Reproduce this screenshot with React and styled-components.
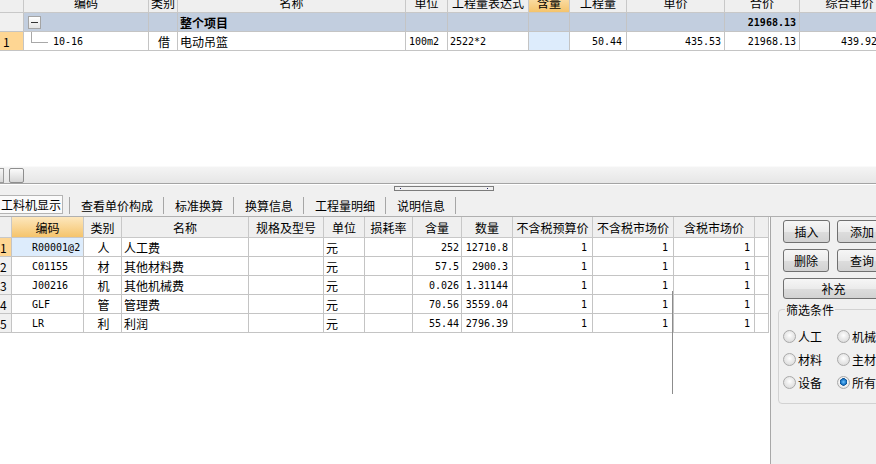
import React from "react";
import styled, { createGlobalStyle } from "styled-components";

const GlobalStyle = createGlobalStyle`
  html, body {
    margin: 0;
    padding: 0;
    background: #f0f0f0;
    overflow: hidden;
  }
  body {
    font-family: "Noto Sans CJK SC", "Noto Sans", sans-serif;
    font-size: 12px;
    color: #000;
  }
`;

const CJK = `"Noto Sans CJK SC", "Noto Sans", sans-serif`;
const MONO = `"DejaVu Sans Mono", "Noto Sans CJK SC", monospace`;

const TOP_COLS = "24px 125px 29px 228px 42px 81px 41px 57px 98px 75px 100px";
const LOW_COLS =
  "12px 72px 38px 127px 75px 41px 48px 49px 51px 80px 81px 81px 14px";

const Page = styled.div`
  width: 876px;
  height: 464px;
  display: flex;
  flex-direction: column;
  overflow: hidden;
  background: #f0f0f0;
`;

/* ---------- upper grid ---------- */

const TopGrid = styled.div`
  height: 166px;
  background: #fff;
  overflow: hidden;
  flex-shrink: 0;
`;

const Row = styled.div`
  display: grid;
  grid-template-columns: ${p => p.$cols};
  height: ${p => p.$h || 19}px;
  background: ${p => p.$bg || "#fff"};
  width: max-content;
`;

const HeadRow = styled(Row)`
  margin-top: ${p => p.$shift || 0}px;
  background: #efefef;
`;

const Cell = styled.div`
  box-sizing: border-box;
  border-right: 1px solid #c4c4c4;
  border-bottom: 1px solid #c4c4c4;
  display: flex;
  align-items: center;
  justify-content: ${p =>
    p.$align === "right" ? "flex-end" : p.$align === "center" ? "center" : "flex-start"};
  padding: 0 ${p => (p.$align === "right" ? p.$pad ?? 3 : 0)}px 0
    ${p => (p.$align === "right" ? 0 : p.$pad ?? 2)}px;
  font-family: ${p => (p.$mono ? MONO : CJK)};
  font-size: ${p => (p.$mono ? "10px" : "12px")};
  font-weight: ${p => (p.$bold ? 700 : 400)};
  background: ${p => p.$bg || "transparent"};
  white-space: nowrap;
  overflow: hidden;
`;

const HeadCell = styled(Cell)`
  justify-content: center;
  padding: 0;
  background: ${p =>
    p.$hot ? "linear-gradient(#fde7bd, #f5c46c)" : "#efefef"};
  border-color: #c8c8c8;
`;

const NumCell = styled(Cell)`
  background: ${p => (p.$hot ? "#fed693" : "#f0f0f0")};
  padding-left: ${p => p.$pad ?? 3}px;
`;

const TreeBox = styled.span`
  width: 11px;
  height: 11px;
  margin-left: 2px;
  border: 1px solid #a4a4a4;
  background: linear-gradient(#ffffff, #e4e4e4);
  display: flex;
  align-items: center;
  justify-content: center;

  &::after {
    content: "";
    width: 7px;
    height: 1px;
    background: #333;
  }
`;

const Elbow = styled.span`
  align-self: flex-start;
  width: 16px;
  height: 10px;
  margin-left: 7px;
  margin-right: 5px;
  border-left: 1px solid #a8a8a8;
  border-bottom: 1px solid #a8a8a8;
`;

/* ---------- scroll + splitter + tabs ---------- */

const HScroll = styled.div`
  height: 17px;
  flex-shrink: 0;
  display: flex;
  align-items: center;
  gap: 5px;
  background: linear-gradient(#f4f4f4, #e6e6e6);
  border-top: 1px solid #fafafa;
  box-sizing: border-box;
`;

const ScrollStub = styled.div`
  width: 3px;
  height: 13px;
  background: linear-gradient(#f6f6f6, #d8d8d8);
  border: 1px solid #9a9a9a;
  border-left: 0;
`;

const ScrollThumb = styled.div`
  width: 15px;
  height: 15px;
  box-sizing: border-box;
  border: 1px solid #8e8e8e;
  border-radius: 2px;
  background: linear-gradient(#fbfbfb, #d6d6d6);
`;

const Splitter = styled.div`
  height: 13px;
  flex-shrink: 0;
  box-sizing: border-box;
  border-top: 1px solid #a4a4a4;
  box-shadow: inset 0 1px 0 #ffffff;
  padding: 2px 0 0 394px;
`;

const Grip = styled.div`
  width: 100px;
  height: 5px;
  box-sizing: border-box;
  border: 1px solid #7c7c7c;
  display: flex;
  justify-content: space-between;
  align-items: center;
  padding: 0 5px;

  &::before,
  &::after {
    content: "";
    width: 1px;
    height: 1px;
    background: #222266;
  }
`;

const TabBar = styled.div`
  height: 20px;
  flex-shrink: 0;
  display: flex;
  align-items: center;
  border-bottom: 1px solid #b0b0b0;
`;

const ActiveTab = styled.div`
  height: 19px;
  box-sizing: border-box;
  margin: -3px 6px 0 -1px;
  padding: 0 1px 0 1px;
  border: 1px solid #b4b4b4;
  background: #fbfbfb;
  display: flex;
  align-items: center;
`;

const Tab = styled.div`
  height: 17px;
  box-sizing: border-box;
  margin-top: -2px;
  padding: 0 10px 0 11px;
  border-left: 1px solid #a6a6a6;
  border-right: ${p => (p.$last ? "1px solid #a6a6a6" : "0")};
  display: flex;
  align-items: center;
`;

/* ---------- lower area ---------- */

const Lower = styled.div`
  flex: 1;
  display: flex;
  min-height: 0;
`;

const LowGrid = styled.div`
  width: 770px;
  flex-shrink: 0;
  background: #fff;
  position: relative;
  overflow: hidden;
`;

const DragLine = styled.div`
  position: absolute;
  left: 672px;
  top: 74px;
  width: 1px;
  height: 103px;
  background: #8c8c8c;
`;

const SidePanel = styled.div`
  flex: 1;
  border-left: 1px solid #a8a8a8;
  background: #f0f0f0;
  padding: 3px 0 0 12px;
  display: flex;
  flex-direction: column;
  overflow: hidden;
`;

const Buttons = styled.div`
  display: grid;
  grid-template-columns: 47px 47px;
  grid-auto-rows: 23px;
  column-gap: 7px;
  row-gap: 6px;
`;

const Button = styled.div`
  box-sizing: border-box;
  grid-column: ${p => (p.$wide ? "1 / span 2" : "auto")};
  width: ${p => (p.$wide ? "101px" : p.$w ? `${p.$w}px` : "auto")};
  height: ${p => (p.$wide ? 21 : 23)}px;
  border: 1px solid #707070;
  border-radius: 3px;
  background: linear-gradient(#f6f6f6 0%, #ebebeb 50%, #dddddd 51%, #d2d2d2 100%);
  display: flex;
  align-items: center;
  justify-content: center;
  font-size: 12px;
`;

const Filter = styled.fieldset`
  margin: 0 0 0 -5px;
  padding: 10px 0 12px 4px;
  width: 120px;
  border: 1px solid #d2d2d2;
  border-radius: 4px;
  display: grid;
  grid-template-columns: 54px 54px;
  row-gap: 6px;
`;

const Legend = styled.legend`
  padding: 0 1px;
  margin-left: 2px;
  font-size: 12px;
`;

const Radio = styled.label`
  display: flex;
  align-items: center;
  gap: 2px;
  height: 17px;
  white-space: nowrap;

  &::before {
    content: "";
    width: 11px;
    height: 11px;
    border-radius: 50%;
    border: 1px solid #a9a9a9;
    background: ${p =>
      p.$on
        ? "radial-gradient(circle at 50% 45%, #6fc4ff 0, #1b78c9 2.5px, #0b4f8f 3.5px, #f4f4f4 4px, #d6d6d6 100%)"
        : "radial-gradient(circle at 50% 40%, #ffffff 0, #eeeeee 3px, #d4d4d4 100%)"};
  }
`;

const lowRows = [
  { n: "1", code: "R00001@2", type: "人", name: "人工费", qty: "252", num: "12710.8" },
  { n: "2", code: "C01155", type: "材", name: "其他材料费", qty: "57.5", num: "2900.3" },
  { n: "3", code: "J00216", type: "机", name: "其他机械费", qty: "0.026", num: "1.31144" },
  { n: "4", code: "GLF", type: "管", name: "管理费", qty: "70.56", num: "3559.04" },
  { n: "5", code: "LR", type: "利", name: "利润", qty: "55.44", num: "2796.39" },
];

const topHead = ["", "编码", "类别", "名称", "单位", "工程量表达式", "含量", "工程量", "单价", "合价", "综合单价"];
const lowHead = ["", "编码", "类别", "名称", "规格及型号", "单位", "损耗率", "含量", "数量", "不含税预算价", "不含税市场价", "含税市场价", ""];

export default function App() {
  return (
    <Page>
      <GlobalStyle />
      <TopGrid>
        <HeadRow $cols={TOP_COLS} $h={20} $shift={-7}>
          {topHead.map((h, i) => (
            <HeadCell key={i} $hot={h === "含量"}>
              {h}
            </HeadCell>
          ))}
        </HeadRow>
        <Row $cols={TOP_COLS} $bg="#c2cedf">
          <NumCell />
          <Cell>
            <TreeBox />
          </Cell>
          <Cell />
          <Cell $bold>整个项目</Cell>
          <Cell />
          <Cell />
          <Cell />
          <Cell />
          <Cell />
          <Cell $align="right" $mono $bold>
            21968.13
          </Cell>
          <Cell />
        </Row>
        <Row $cols={TOP_COLS}>
          <NumCell $hot>1</NumCell>
          <Cell $mono $pad={0}>
            <Elbow />
            10-16
          </Cell>
          <Cell $align="center">借</Cell>
          <Cell>电动吊篮</Cell>
          <Cell $mono $pad={3}>
            100m2
          </Cell>
          <Cell $mono>2522*2</Cell>
          <Cell $bg="#ddecfc" />
          <Cell $align="right" $mono $pad={4}>
            50.44
          </Cell>
          <Cell $align="right" $mono>
            435.53
          </Cell>
          <Cell $align="right" $mono>
            21968.13
          </Cell>
          <Cell $align="right" $mono $pad={22}>
            439.92
          </Cell>
        </Row>
      </TopGrid>

      <HScroll>
        <ScrollStub />
        <ScrollThumb />
      </HScroll>

      <Splitter>
        <Grip />
      </Splitter>

      <TabBar>
        <ActiveTab>工料机显示</ActiveTab>
        <Tab>查看单价构成</Tab>
        <Tab>标准换算</Tab>
        <Tab>换算信息</Tab>
        <Tab>工程量明细</Tab>
        <Tab $last>说明信息</Tab>
      </TabBar>

      <Lower>
        <LowGrid>
          <HeadRow $cols={LOW_COLS} $h={21}>
            {lowHead.map((h, i) => (
              <HeadCell key={i} $hot={h === "编码"}>
                {h}
              </HeadCell>
            ))}
          </HeadRow>
          {lowRows.map((r, i) => (
            <Row key={r.n} $cols={LOW_COLS}>
              <NumCell $hot={i === 0} $pad={0}>
                {r.n}
              </NumCell>
              <Cell $mono $pad={20} $bg={i === 0 ? "#ddecfc" : undefined}>
                {r.code}
              </Cell>
              <Cell $align="center">{r.type}</Cell>
              <Cell>{r.name}</Cell>
              <Cell />
              <Cell>元</Cell>
              <Cell />
              <Cell $align="right" $mono $pad={2}>
                {r.qty}
              </Cell>
              <Cell $align="right" $mono $pad={4}>
                {r.num}
              </Cell>
              <Cell $align="right" $mono $pad={5}>
                1
              </Cell>
              <Cell $align="right" $mono $pad={5}>
                1
              </Cell>
              <Cell $align="right" $mono $pad={4}>
                1
              </Cell>
              <Cell />
            </Row>
          ))}
          <DragLine />
        </LowGrid>

        <SidePanel>
          <Buttons>
            <Button>插入</Button>
            <Button $w={50}>添加</Button>
            <Button $w={46}>删除</Button>
            <Button $w={50}>查询</Button>
            <Button $wide>补充</Button>
          </Buttons>
          <Filter>
            <Legend>筛选条件</Legend>
            <Radio>人工</Radio>
            <Radio>机械</Radio>
            <Radio>材料</Radio>
            <Radio>主材</Radio>
            <Radio>设备</Radio>
            <Radio $on>所有</Radio>
          </Filter>
        </SidePanel>
      </Lower>
    </Page>
  );
}
